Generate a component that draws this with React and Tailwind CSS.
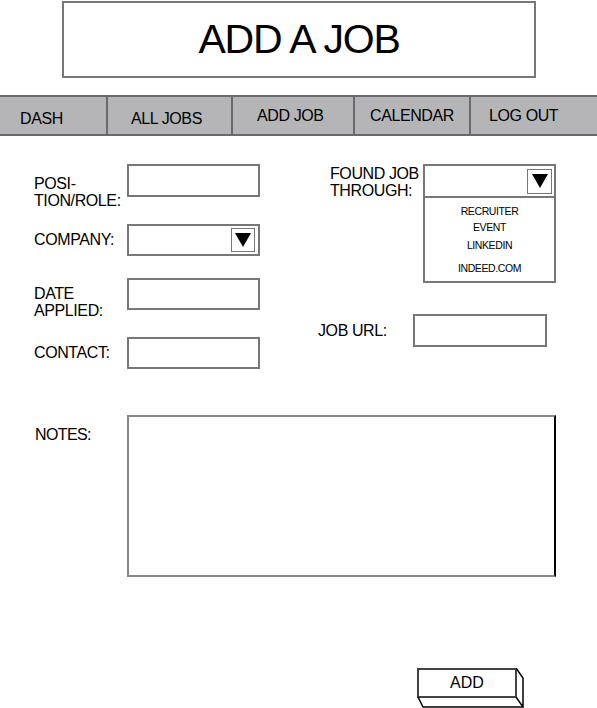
import React from 'react';

const font = { fontFamily: '"Liberation Sans", Arial, sans-serif' };

function Arrow({ className }) {
  return (
    <div className={`flex items-center justify-center border border-[#777] bg-white ${className}`}>
      <svg width="18" height="16" viewBox="0 0 18 16">
        <polygon points="1,1 17,1 9,15" fill="#000" />
      </svg>
    </div>
  );
}

function Field({ label, height, labelTop, children }) {
  return (
    <div className="flex items-start" style={{ height }}>
      <div className="w-[93px] shrink-0 whitespace-nowrap text-[16px] leading-[17px] tracking-[-0.4px]" style={{ marginTop: labelTop }}>
        {label}
      </div>
      {children}
    </div>
  );
}

export default function App() {
  const tabs = [
    { name: 'DASH', w: 'w-[106px]', pl: 'pl-[20px]', pt: 'pt-[14px]' },
    { name: 'ALL JOBS', w: 'w-[125px]', pl: 'pl-[23px]', pt: 'pt-[14px]' },
    { name: 'ADD JOB', w: 'w-[122px]', pl: 'pl-[24px]', pt: 'pt-[11px]' },
    { name: 'CALENDAR', w: 'w-[116px]', pl: 'pl-[15px]', pt: 'pt-[11px]' },
    { name: 'LOG OUT', w: 'flex-1', pl: 'pl-[18px]', pt: 'pt-[11px]' },
  ];

  return (
    <div className="w-[597px] h-[708px] bg-white overflow-hidden text-black" style={font}>
      {/* title */}
      <div className="pt-px">
        <div className="ml-[62px] w-[474px] h-[77px] border-2 border-[#777] flex items-center justify-center">
          <h1 className="text-[41px] leading-none tracking-[-1.2px]">ADD A JOB</h1>
        </div>
      </div>

      {/* nav */}
      <nav className="mt-[17px] h-[41px] flex bg-[#b5b5b8] border-y-2 border-[#6a6a6e]">
        {tabs.map((t, i) => (
          <div
            key={t.name}
            className={`${t.w} ${t.pl} ${t.pt} h-full text-[16px] leading-none tracking-[-0.4px] ${i > 0 ? 'border-l-2 border-[#6a6a6e]' : ''}`}
          >
            {t.name}
          </div>
        ))}
      </nav>

      {/* form */}
      <div className="pt-[28px] pl-[34px] flex">
        <div className="w-[226px] flex flex-col">
          <Field label={<>POSI-<br />TION/ROLE:</>} height={60} labelTop={11}>
            <input className="w-[133px] h-[33px] border-2 border-[#777] outline-none" />
          </Field>
          <Field label="COMPANY:" height={54} labelTop={7}>
            <div className="w-[133px] h-[32px] border-2 border-[#777] flex items-center justify-end pr-[3px]">
              <Arrow className="w-[24px] h-[24px]" />
            </div>
          </Field>
          <Field label={<>DATE<br />APPLIED:</>} height={59} labelTop={7}>
            <input className="w-[133px] h-[32px] border-2 border-[#777] outline-none" />
          </Field>
          <Field label="CONTACT:" height={32} labelTop={7}>
            <input className="w-[133px] h-[32px] border-2 border-[#777] outline-none" />
          </Field>
        </div>

        <div className="ml-[58px] flex flex-col">
          <div className="flex items-start ml-[12px]">
            <div className="w-[93px] shrink-0 whitespace-nowrap text-[16px] leading-[17px] tracking-[-0.4px] mt-[1px]">
              FOUND JOB<br />THROUGH:
            </div>
            <div className="w-[133px] h-[119px] border-2 border-[#777] flex flex-col">
              <div className="h-[32px] border-b-2 border-[#777] flex items-center justify-end pr-[2px]">
                <Arrow className="w-[25px] h-[25px]" />
              </div>
              <ul className="flex flex-col items-center text-[10.5px] leading-none tracking-[-0.4px] pt-[8px]">
                <li>RECRUITER</li>
                <li className="mt-[5px]">EVENT</li>
                <li className="mt-[8px]">LINKEDIN</li>
                <li className="mt-[12px]">INDEED.COM</li>
              </ul>
            </div>
          </div>
          <div className="mt-[31px] flex items-center">
            <div className="w-[95px] shrink-0 text-[16px] leading-none tracking-[-0.4px]">JOB URL:</div>
            <input className="w-[134px] h-[33px] border-2 border-[#777] outline-none" />
          </div>
        </div>
      </div>

      {/* notes */}
      <div className="mt-[46px] pl-[35px] flex items-start">
        <div className="w-[92px] shrink-0 text-[16px] leading-none tracking-[-0.6px] mt-[12px]">NOTES:</div>
        <textarea className="w-[429px] h-[162px] border-2 border-[#888] border-r-black resize-none outline-none" />
      </div>

      {/* add button */}
      <div className="mt-[91px] ml-[417px] relative w-[107px] h-[40px]">
        <button className="w-[100px] h-[30px] border-2 border-[#444] bg-white text-[16px] leading-none">ADD</button>
        <svg className="absolute left-0 top-0" width="107" height="40" viewBox="0 0 107 40">
          <polyline points="99,0 106,10 106,39 99,29" fill="none" stroke="#000" strokeWidth="1.5" />
          <polyline points="1,29 6,39 106,39" fill="none" stroke="#000" strokeWidth="1.5" />
        </svg>
      </div>
    </div>
  );
}
